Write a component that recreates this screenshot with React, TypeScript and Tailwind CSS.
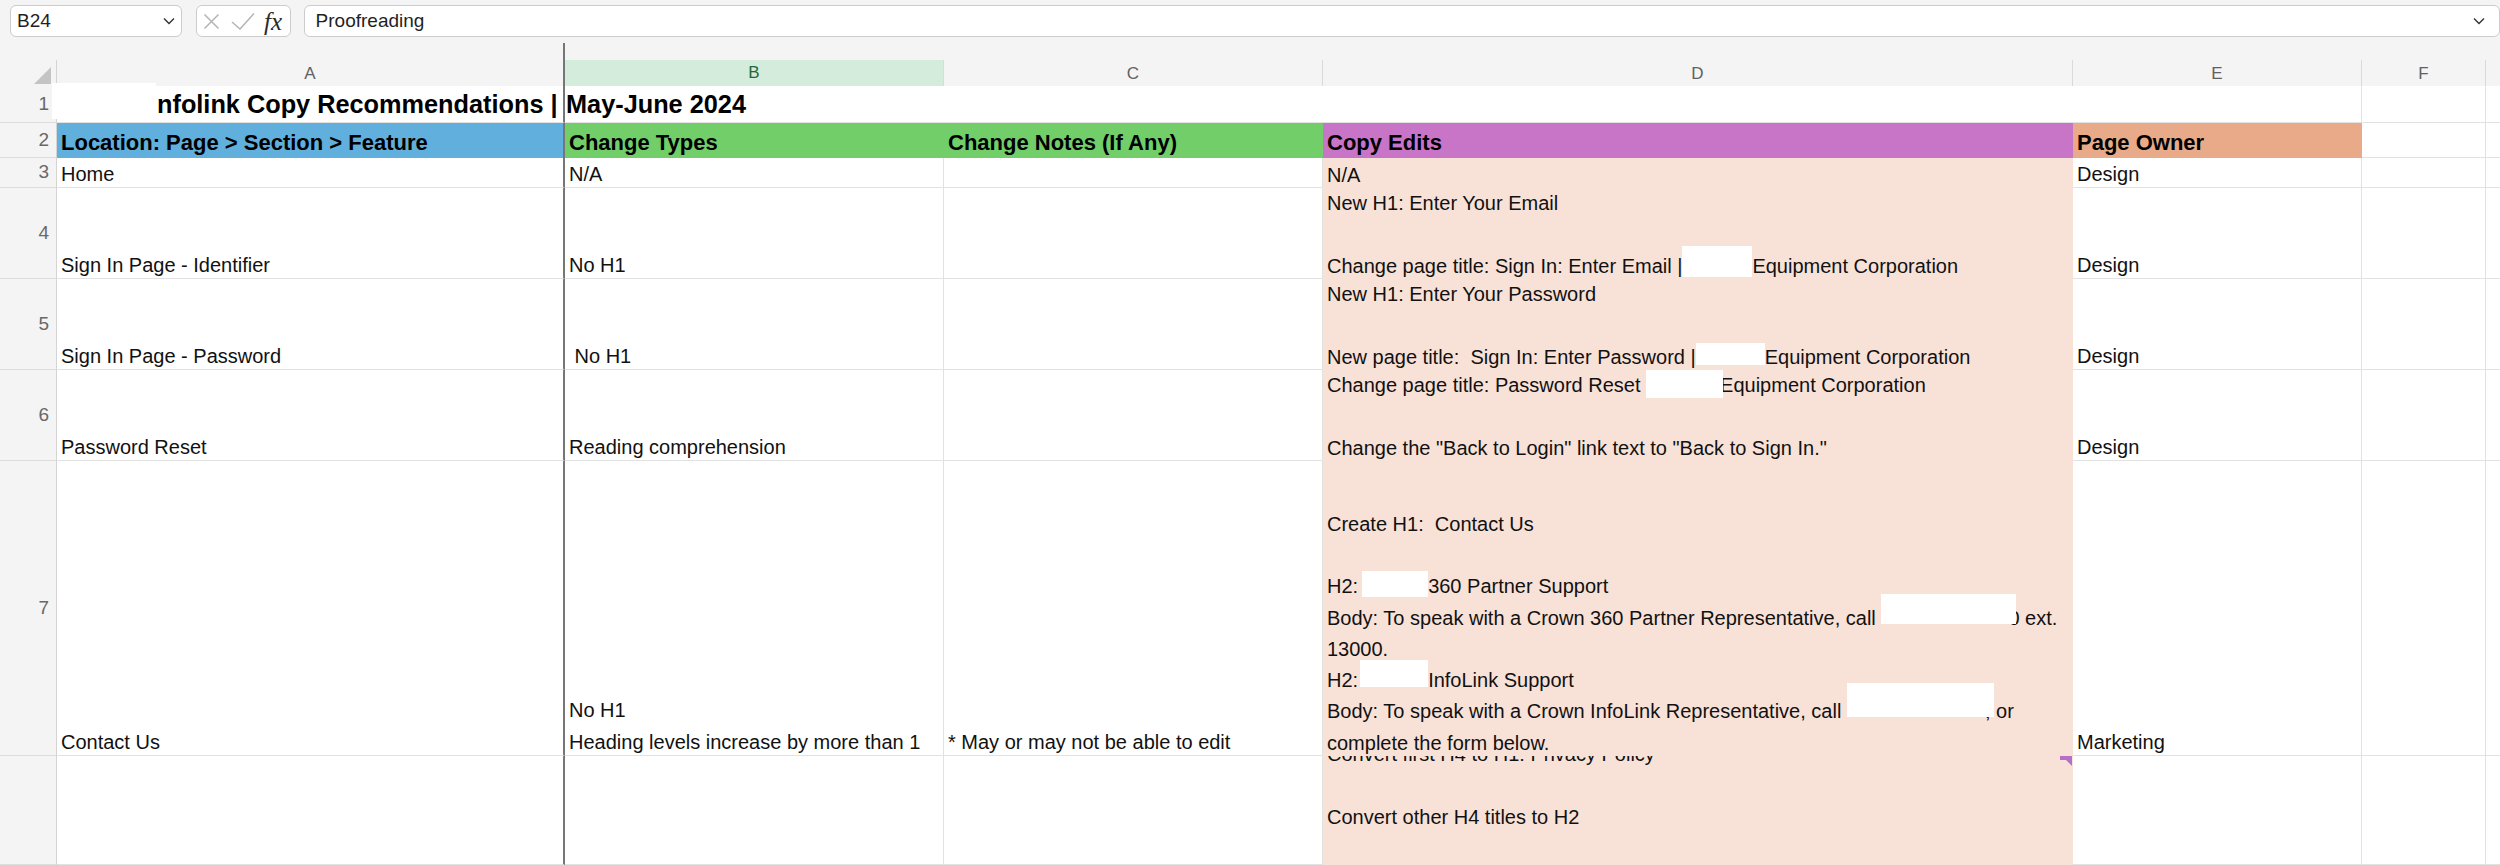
import type { ReactNode } from "react";

// column template: row header, A..F, then the sliver of G
const GRID = "grid grid-cols-[57px_508px_379px_379px_750px_289px_124px_1fr]";

type Lines = ReactNode[];

function RowHead({ n }: { n?: number }) {
  return (
    <div className="flex items-center justify-end border-r border-b border-r-[#d4d4d4] border-b-[#dddddd] bg-[#f4f4f4] pr-[7px] text-[19px] text-[#686868]">
      {n}
    </div>
  );
}

function TextLines({ lines }: { lines: Lines }) {
  return (
    <div className="-mb-[3px]">
      {lines.map((l, i) => (
        <div key={i} className="h-[31.3px] whitespace-pre leading-[31.3px]">
          {l === "" ? "\u00a0" : l}
        </div>
      ))}
    </div>
  );
}

// plain white cell, bottom aligned like Excel does it
function Cell({ lines = [], freeze = false }: { lines?: Lines; freeze?: boolean }) {
  return (
    <div
      className={`flex flex-col justify-end overflow-hidden border-b border-b-[#e2e2e2] bg-white pl-[4px] ${
        freeze ? "border-r-2 border-r-[#767676]" : "border-r border-r-[#e2e2e2]"
      }`}
    >
      {lines.length > 0 && <TextLines lines={lines} />}
    </div>
  );
}

function PeachCell({ lines }: { lines: Lines }) {
  return (
    <div className="flex flex-col justify-end overflow-hidden bg-[#f8e2d8] pl-[4px]">
      <TextLines lines={lines} />
    </div>
  );
}

function Tail() {
  return <div className="border-b border-b-[#e2e2e2] bg-white" />;
}

// white redaction box sitting in the text line; the negative top margin
// keeps it from making the line taller
function Blank({ className }: { className: string }) {
  return <span className={`relative -mt-[16px] inline-block bg-white ${className}`} />;
}

function Chevron() {
  return (
    <svg width="12" height="8" viewBox="0 0 12 8">
      <path d="M1 1.5 L6 6.5 L11 1.5" fill="none" stroke="#333333" strokeWidth="1.4" />
    </svg>
  );
}

function Toolbar() {
  return (
    <div className="flex h-[43px] items-start pl-[10px] pt-[5px] text-[19px] text-[#1f1f1f]">
      <div className="flex h-[32px] w-[173px] items-center justify-between rounded-[6px] border border-[#cccccc] bg-white pl-[6px] pr-[6px]">
        <span>B24</span>
        <Chevron />
      </div>
      <div className="ml-[14px] flex h-[32px] w-[95px] items-center rounded-[6px] border border-[#cccccc] bg-white pl-[6px]">
        <svg width="17" height="17" viewBox="0 0 17 17">
          <path d="M1.5 1.5 L15.5 15.5 M15.5 1.5 L1.5 15.5" stroke="#b4b4b4" strokeWidth="1.5" />
        </svg>
        <svg className="ml-[11px]" width="24" height="18" viewBox="0 0 24 18">
          <path d="M1 10 L9 17 L23 1.5" fill="none" stroke="#b4b4b4" strokeWidth="1.5" />
        </svg>
        <span className="ml-[9px] font-['Liberation_Serif',serif] text-[25px] italic leading-none text-[#2a2a2a]">
          fx
        </span>
      </div>
      <div className="ml-[13px] flex h-[32px] w-[2209px] items-center justify-between rounded-[6px] border border-[#cccccc] bg-white pl-[11px] pr-[14px]">
        <span>Proofreading</span>
        <Chevron />
      </div>
    </div>
  );
}

function ColumnHeads() {
  const head =
    "flex items-center justify-center border-r border-b border-r-[#dadada] border-b-[#cdcdcd] bg-[#f4f4f4] text-[17px] text-[#616161]";
  return (
    <>
      {/* strip above the letters, only the freeze line shows here */}
      <div className={`${GRID} h-[17px]`}>
        <div />
        <div className="border-r-2 border-r-[#767676]" />
      </div>
      <div className={`${GRID} h-[26px]`}>
        <div className="flex items-end justify-end border-r border-b border-r-[#d4d4d4] border-b-[#cdcdcd] bg-[#f4f4f4] pb-[4px] pr-[5px]">
          <svg width="17" height="17" viewBox="0 0 17 17">
            <polygon points="17,0 17,17 0,17" fill="#c4c4c4" />
          </svg>
        </div>
        <div className="flex items-center justify-center border-r-2 border-b border-r-[#767676] border-b-[#cdcdcd] bg-[#f4f4f4] text-[17px] text-[#616161]">
          A
        </div>
        <div className="flex items-center justify-center border-r border-b-[3px] border-r-[#cfe0d4] border-b-[#2f7a4a] bg-[#d4ecdb] text-[17px] text-[#1e6b3b]">
          B
        </div>
        <div className={head}>C</div>
        <div className={head}>D</div>
        <div className={head}>E</div>
        <div className={head}>F</div>
        <div className="border-b border-b-[#cdcdcd] bg-[#f4f4f4]" />
      </div>
    </>
  );
}

function HeaderText({ children }: { children: ReactNode }) {
  return (
    <div className="whitespace-nowrap pl-[4px] text-[22px] font-bold leading-[31.3px] text-black">
      {children}
    </div>
  );
}

export default function App() {
  return (
    <div className="h-[865px] w-[2500px] overflow-hidden bg-[#f4f4f4] font-['Liberation_Sans',Arial,sans-serif] text-[20px] text-[#111111]">
      <Toolbar />
      <ColumnHeads />

      {/* row 1: title */}
      <div className={`${GRID} h-[37px]`}>
        <RowHead n={1} />
        <div className="relative flex items-end border-r-2 border-b border-r-[#767676] border-b-[#e2e2e2] bg-white">
          <div className="absolute -left-[5px] -top-[3px] h-[36px] w-[104px] bg-white" />
          <div className="whitespace-nowrap pb-[2px] pl-[100px] text-[25.3px] font-bold leading-[31.3px] text-black">
            nfolink Copy Recommendations |
          </div>
        </div>
        <div className="col-span-4 flex items-end border-r border-b border-r-[#e2e2e2] border-b-[#e2e2e2] bg-white">
          <div className="whitespace-nowrap pb-[2px] pl-[1px] text-[25.3px] font-bold leading-[31.3px] text-black">
            May-June 2024
          </div>
        </div>
        <Cell />
        <Tail />
      </div>

      {/* row 2: coloured headers */}
      <div className={`${GRID} h-[35px]`}>
        <RowHead n={2} />
        <div className="flex items-end border-r-2 border-r-[#767676] bg-[#61afdc]">
          <HeaderText>Location: Page &gt; Section &gt; Feature</HeaderText>
        </div>
        <div className="flex items-end bg-[#71ce69]">
          <HeaderText>Change Types</HeaderText>
        </div>
        <div className="flex items-end bg-[#71ce69]">
          <HeaderText>Change Notes (If Any)</HeaderText>
        </div>
        <div className="flex items-end bg-[#c874c7]">
          <HeaderText>Copy Edits</HeaderText>
        </div>
        <div className="flex items-end bg-[#e8aa88]">
          <HeaderText>Page Owner</HeaderText>
        </div>
        <Cell />
        <Tail />
      </div>

      {/* row 3 */}
      <div className={`${GRID} h-[30px]`}>
        <RowHead n={3} />
        <Cell freeze lines={["Home"]} />
        <Cell lines={["N/A"]} />
        <Cell />
        <PeachCell lines={["N/A"]} />
        <Cell lines={["Design"]} />
        <Cell />
        <Tail />
      </div>

      {/* row 4 */}
      <div className={`${GRID} h-[91px]`}>
        <RowHead n={4} />
        <Cell freeze lines={["Sign In Page - Identifier"]} />
        <Cell lines={["No H1"]} />
        <Cell />
        <PeachCell
          lines={[
            "New H1: Enter Your Email",
            "",
            <>
              Change page title: Sign In: Enter Email |
              <Blank className="h-[31px] w-[70px] align-[-4px]" />
              Equipment Corporation
            </>,
          ]}
        />
        <Cell lines={["Design"]} />
        <Cell />
        <Tail />
      </div>

      {/* row 5 */}
      <div className={`${GRID} h-[91px]`}>
        <RowHead n={5} />
        <Cell freeze lines={["Sign In Page - Password"]} />
        <Cell lines={[" No H1"]} />
        <Cell />
        <PeachCell
          lines={[
            "New H1: Enter Your Password",
            "",
            <>
              New page title:  Sign In: Enter Password |
              <Blank className="h-[22px] w-[69px] align-[-1px]" />
              Equipment Corporation
            </>,
          ]}
        />
        <Cell lines={["Design"]} />
        <Cell />
        <Tail />
      </div>

      {/* row 6 */}
      <div className={`${GRID} h-[91px]`}>
        <RowHead n={6} />
        <Cell freeze lines={["Password Reset"]} />
        <Cell lines={["Reading comprehension"]} />
        <Cell />
        <PeachCell
          lines={[
            <>
              Change page title: Password Reset{" "}
              <Blank className="z-10 -mr-[3px] h-[32px] w-[77px] align-[-6px]" />
              Equipment Corporation
            </>,
            "",
            'Change the "Back to Login" link text to "Back to Sign In."',
          ]}
        />
        <Cell lines={["Design"]} />
        <Cell />
        <Tail />
      </div>

      {/* row 7 */}
      <div className={`${GRID} h-[295px]`}>
        <RowHead n={7} />
        <Cell freeze lines={["Contact Us"]} />
        <Cell lines={["No H1", "Heading levels increase by more than 1"]} />
        <Cell lines={["* May or may not be able to edit"]} />
        <PeachCell
          lines={[
            "",
            "",
            "Create H1:  Contact Us",
            "",
            <>
              H2:
              <Blank className="ml-[4px] h-[26px] w-[66px] align-[-4px]" />
              360 Partner Support
            </>,
            <>
              Body: To speak with a Crown 360 Partner Representative, call{" "}
              <Blank className="z-10 -mr-[8px] h-[30px] w-[135px] align-[1px]" />0 ext.
            </>,
            "13000.",
            <>
              H2:
              <Blank className="ml-[2px] h-[27px] w-[68px] align-[0px]" />
              InfoLink Support
            </>,
            <>
              Body: To speak with a Crown InfoLink Representative, call{" "}
              <Blank className="z-10 -mr-[9px] h-[34px] w-[147px] align-[1px]" />, or
            </>,
            "complete the form below.",
          ]}
        />
        <Cell lines={["Marketing"]} />
        <Cell />
        <Tail />
      </div>

      {/* row 8, runs past the bottom of the window */}
      <div className={`${GRID} h-[109px]`}>
        <RowHead />
        <Cell freeze />
        <Cell />
        <Cell />
        <div className="relative overflow-hidden bg-[#f8e2d8] pl-[4px]">
          <svg className="absolute right-[1px] top-0" width="12" height="10" viewBox="0 0 12 10">
            <polygon points="0,0 12,0 12,10 6,4 0,4" fill="#b56fc6" />
          </svg>
          <div className="-mt-[17px]">
            {["Convert first H4 to H1: Privacy Policy", "", "Convert other H4 titles to H2", ""].map((l, i) => (
              <div key={i} className="h-[31.3px] whitespace-pre leading-[31.3px]">
                {l === "" ? "\u00a0" : l}
              </div>
            ))}
          </div>
        </div>
        <Cell />
        <Cell />
        <Tail />
      </div>
    </div>
  );
}
